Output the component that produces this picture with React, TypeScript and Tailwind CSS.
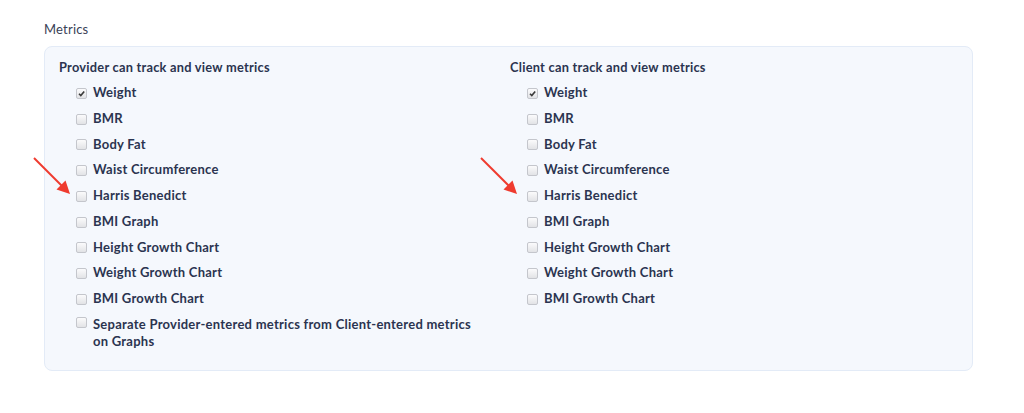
const items = [
  { label: 'Weight', checked: true },
  { label: 'BMR' },
  { label: 'Body Fat' },
  { label: 'Waist Circumference' },
  { label: 'Harris Benedict' },
  { label: 'BMI Graph' },
  { label: 'Height Growth Chart' },
  { label: 'Weight Growth Chart' },
  { label: 'BMI Growth Chart' },
];

function Box({ checked }: { checked?: boolean }) {
  return (
    <span className="relative mt-[1px] inline-block h-[11px] w-[11px] shrink-0 rounded-[2px] border border-[#c4c6cc] bg-gradient-to-b from-[#fbfbfc] to-[#e2e3e6]">
      {checked && (
        <svg viewBox="0 0 11 11" className="absolute left-[-1px] top-[-1px] h-[11px] w-[11px]">
          <path d="M3 5.8 L4.8 7.6 L8.2 3.4" fill="none" stroke="#3a3a3a" strokeWidth="1.6" />
        </svg>
      )}
    </span>
  );
}

function Row({ label, checked }: { label: string; checked?: boolean }) {
  return (
    <div className="flex h-[25.75px] items-center gap-[6px] pl-[17px]">
      <Box checked={checked} />
      <span>{label}</span>
    </div>
  );
}

function Arrow({ className }: { className: string }) {
  return (
    <svg viewBox="0 0 40 40" className={'absolute h-[40px] w-[40px] ' + className}>
      <line x1="2" y1="2" x2="31" y2="31" stroke="#ef3b2f" strokeWidth="2" />
      <path d="M38 38 L24.5 33.5 L33.5 24.5 Z" fill="#ef3b2f" />
    </svg>
  );
}

export default function App() {
  return (
    <div className="relative h-[413px] w-[1024px] bg-white font-['Lato','Noto_Sans',sans-serif] text-[#2b3450]">
      <div className="px-[44px] pt-[21px]">
        <div className="text-[13px] leading-[16px] tracking-[0.2px] text-[#3a4256]">Metrics</div>
        <div className="mt-[9px] w-[929px] rounded-[8px] border border-[#e3ebf7] bg-[#f5f8fd] px-[14px] pb-[20px] pt-[12px]">
          <div className="grid grid-cols-[451px_1fr] text-[13px] font-bold tracking-[0.25px]">
            <div>
              <div className="mb-[4px] text-[12.8px] leading-[17px]">Provider can track and view metrics</div>
              {items.map((it) => (
                <Row key={it.label} label={it.label} checked={it.checked} />
              ))}
              <div className="flex items-start gap-[6px] pl-[17px] pt-[4px] leading-[17px]">
                <Box />
                <span className="w-[395px]">Separate Provider-entered metrics from Client-entered metrics on Graphs</span>
              </div>
            </div>
            <div>
              <div className="mb-[4px] text-[12.8px] leading-[17px]">Client can track and view metrics</div>
              {items.map((it) => (
                <Row key={it.label} label={it.label} checked={it.checked} />
              ))}
            </div>
          </div>
        </div>
      </div>
      <Arrow className="left-[32px] top-[156px]" />
      <Arrow className="left-[479px] top-[156px]" />
    </div>
  );
}
